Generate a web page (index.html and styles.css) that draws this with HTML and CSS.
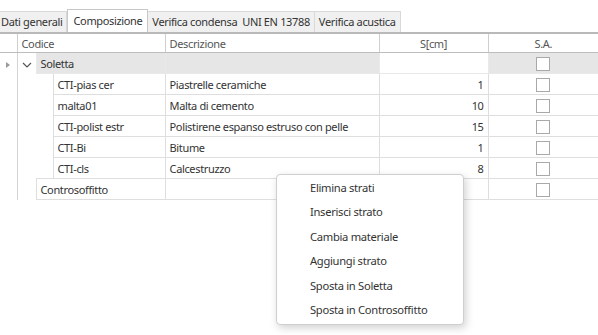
FILE: index.html
```html
<!DOCTYPE html>
<html lang="it">
<head>
    <meta charset="UTF-8">
    <title>Composizione</title>
    <link rel="stylesheet" href="styles.css">
</head>
<body>
    <div class="tabs">
        <div class="tab">Dati generali</div>
        <div class="tab active">Composizione</div>
        <div class="tab">Verifica condensa&nbsp; UNI EN 13788</div>
        <div class="tab">Verifica acustica</div>
    </div>

    <table class="grid">
        <colgroup>
            <col style="width:17px">
            <col style="width:19px">
            <col style="width:17px">
            <col style="width:112px">
            <col style="width:214px">
            <col style="width:109px">
            <col style="width:110px">
        </colgroup>
        <tr class="head">
            <th class="ind"></th>
            <th colspan="3">Codice</th>
            <th>Descrizione</th>
            <th class="c">S[cm]</th>
            <th class="c">S.A.</th>
        </tr>
        <tr class="group">
            <td class="ind"><span class="tri"></span></td>
            <td class="exp">
                <svg width="10" height="6" viewBox="0 0 10 6"><path d="M1 1 L5 5 L9 1" fill="none" stroke="#555" stroke-width="1.2"/></svg>
            </td>
            <td colspan="2" class="gray">Soletta</td>
            <td class="gray"></td>
            <td></td>
            <td class="gray c"><span class="chk"></span></td>
        </tr>
        <tr>
            <td class="ind"></td><td class="blank"></td><td class="blank"></td>
            <td>CTI-pias cer</td>
            <td>Piastrelle ceramiche</td>
            <td class="r">1</td>
            <td class="c"><span class="chk"></span></td>
        </tr>
        <tr>
            <td class="ind"></td><td class="blank"></td><td class="blank"></td>
            <td>malta01</td>
            <td>Malta di cemento</td>
            <td class="r">10</td>
            <td class="c"><span class="chk"></span></td>
        </tr>
        <tr>
            <td class="ind"></td><td class="blank"></td><td class="blank"></td>
            <td>CTI-polist estr</td>
            <td>Polistirene espanso estruso con pelle</td>
            <td class="r">15</td>
            <td class="c"><span class="chk"></span></td>
        </tr>
        <tr>
            <td class="ind"></td><td class="blank"></td><td class="blank"></td>
            <td>CTI-Bi</td>
            <td>Bitume</td>
            <td class="r">1</td>
            <td class="c"><span class="chk"></span></td>
        </tr>
        <tr class="last-child">
            <td class="ind"></td><td class="blank"></td><td class="blank"></td>
            <td>CTI-cls</td>
            <td>Calcestruzzo</td>
            <td class="r">8</td>
            <td class="c"><span class="chk"></span></td>
        </tr>
        <tr>
            <td class="ind"></td><td class="blank"></td>
            <td colspan="2">Controsoffitto</td>
            <td></td>
            <td class="r"></td>
            <td class="c"><span class="chk"></span></td>
        </tr>
    </table>

    <ul class="menu">
        <li>Elimina strati</li>
        <li>Inserisci strato</li>
        <li>Cambia materiale</li>
        <li>Aggiungi strato</li>
        <li>Sposta in Soletta</li>
        <li>Sposta in Controsoffitto</li>
    </ul>
</body>
</html>
```

FILE: styles.css
```css
body {
    margin: 0;
    background: #ffffff;
    font-family: "Noto Sans", sans-serif;
    font-size: 11px;
    letter-spacing: -0.35px;
    color: #333333;
}

.tabs {
    display: flex;
    align-items: flex-end;
    padding-top: 9px;
    border-bottom: 2px solid #b9b9b9;
}

.tab {
    height: 20px;
    line-height: 20px;
    padding: 0 4px;
    background: #f0f0f0;
    border: 1px solid #d9d9d9;
    border-bottom: none;
    border-left: none;
    color: #333333;
    white-space: nowrap;
}

.tab:first-child {
    padding-left: 1px;
}

.tab.active {
    height: 22px;
    line-height: 21px;
    background: #ffffff;
    border-left: 1px solid #c8c8c8;
    border-color: #c8c8c8;
    padding: 0 5px;
}

.grid {
    border-collapse: collapse;
    table-layout: fixed;
    width: 598px;
}

.grid td,
.grid th {
    height: 20px;
    padding: 0 4px;
    border: 1px solid #dedede;
    white-space: nowrap;
    overflow: hidden;
    text-align: left;
    font-weight: normal;
}

.head th {
    height: 18px;
    color: #555555;
    border-top: none;
    border-right: none;
    border-left: 1px solid #cfcfcf;
    border-bottom: 1px solid #bdbdbd;
}

.head th.ind {
    border-left: none;
}

.grid td.ind {
    border-top: none;
    border-bottom: none;
    border-left: none;
    border-right: 1px solid #d4d4d4;
    padding: 0;
    text-align: center;
}

.grid td.exp {
    padding: 0;
    text-align: center;
    border: none;
    background: #ffffff;
}

.grid td.blank {
    border: none;
}

.last-child td.blank:nth-child(3) {
    border-bottom: 1px solid #dedede;
}

.grid td.gray {
    background: #e6e6e6;
}

.group td {
    border-color: #e9e9e9;
}

.tri {
    display: inline-block;
    width: 0;
    height: 0;
    border-top: 3px solid transparent;
    border-bottom: 3px solid transparent;
    border-left: 4px solid #9a9a9a;
    vertical-align: middle;
}

.c {
    text-align: center !important;
}

.r {
    text-align: right !important;
}

.chk {
    display: inline-block;
    width: 12px;
    height: 12px;
    border: 1px solid #a9a9a9;
    background: #ffffff;
    vertical-align: middle;
}

.menu {
    position: absolute;
    left: 276px;
    top: 174px;
    width: 186px;
    margin: 0;
    padding: 1px 0 2px;
    list-style: none;
    background: #ffffff;
    border: 1px solid #cfcfcf;
    border-radius: 4px;
    box-shadow: 2px 3px 8px rgba(0, 0, 0, 0.18);
    font-size: 11.2px;
    letter-spacing: -0.3px;
    color: #333333;
}

.menu li {
    height: 24.4px;
    line-height: 24.4px;
    padding-left: 33px;
}
```
